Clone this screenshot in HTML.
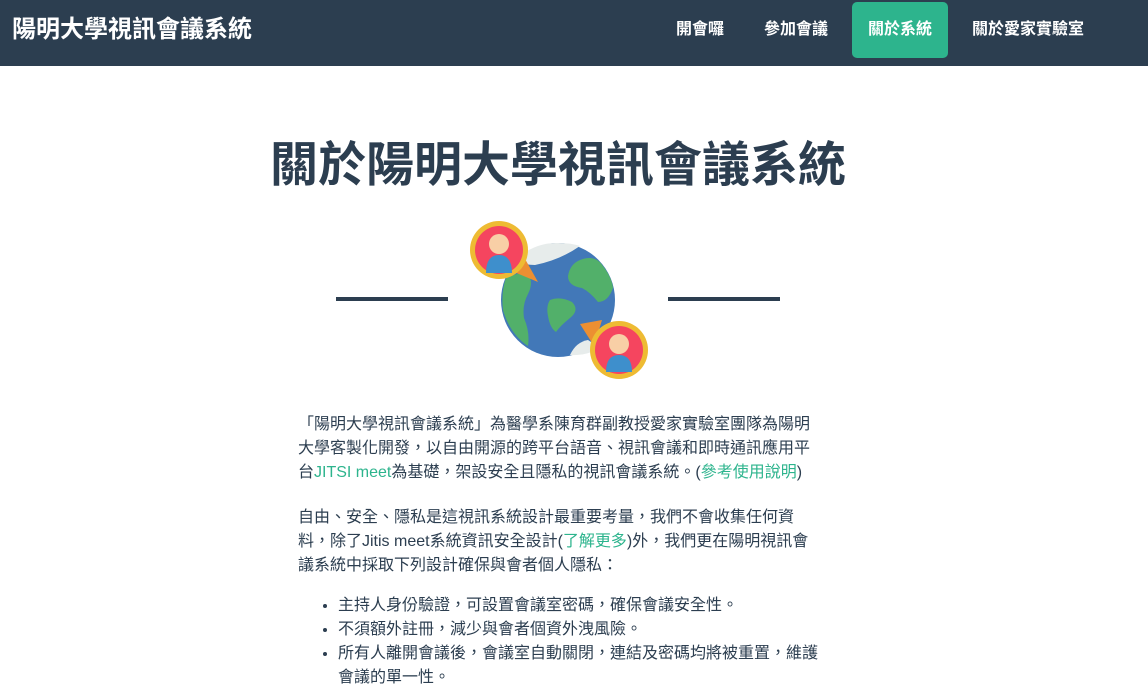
<!DOCTYPE html>
<html><head><meta charset="utf-8"><style>
body{margin:0;background:#fff;font-family:"Liberation Sans","Noto Sans CJK TC",sans-serif;color:#2c3e50;width:1148px;height:690px;overflow:hidden}
.nav{height:66px;background:#2c3e50;position:relative}
.brand{position:absolute;left:12px;top:14px;color:#fff;font-size:24px;font-weight:bold;line-height:32px}
.nav a{position:absolute;top:2px;height:56px;line-height:56px;color:#fff;font-size:16px;font-weight:bold;text-align:center;border-radius:5px}
h1{position:absolute;left:0;width:1116px;text-align:center;top:134px;margin:0;font-size:48px;line-height:64px;font-weight:bold}
.line{position:absolute;top:297px;height:4px;width:112px;background:#2c3e50}
.txt{position:absolute;left:298px;width:525px;font-size:16px;line-height:24px}
.txt p{margin:0 0 21px}
.txt p.l{margin-bottom:16px}
.g{color:#2db48d}
ul{margin:0;padding-left:40px}
</style></head><body>
<div class="nav"><div class="brand">陽明大學視訊會議系統</div>
<a style="left:660px;width:80px">開會囉</a>
<a style="left:750px;width:92px">參加會議</a>
<a style="left:852px;width:96px;background:#2db48d">關於系統</a>
<a style="left:958px;width:140px">關於愛家實驗室</a>
</div>
<h1>關於陽明大學視訊會議系統</h1>
<div class="line" style="left:336px"></div>
<div class="line" style="left:668px"></div>
<svg style="position:absolute;left:440px;top:210px" width="230" height="180" viewBox="0 0 230 180">
<circle cx="118" cy="90" r="57" fill="#4278b8"/>
<path d="M75 50 Q95 32 118 33 Q132 33 140 36 Q120 50 95 55 Q85 55 75 50Z" fill="#e7eceb"/>
<path d="M66 68 Q78 62 88 64 Q94 72 88 84 Q82 95 84 108 Q90 122 88 136 Q70 124 63 100 Q61 82 66 68Z" fill="#52b06a"/>
<path d="M140 50 Q155 44 163 56 Q172 68 173 78 Q168 92 158 92 Q150 82 142 78 Q128 76 128 66 Q130 54 140 50Z" fill="#52b06a"/>
<path d="M110 90 Q120 86 132 92 Q140 100 130 108 Q120 116 116 122 Q110 118 108 106 Q106 96 110 90Z" fill="#52b06a"/>
<path d="M130 145 Q136 132 148 130 L160 138 Q146 146 130 145Z" fill="#e7eceb"/>
<path d="M80 40 L98 72 L74 62Z" fill="#ec8f32"/>
<circle cx="59" cy="40" r="29" fill="#eebb33"/><circle cx="59" cy="40" r="24" fill="#f5455f"/>
<circle cx="59" cy="34" r="10" fill="#f8cfa6"/><path d="M46 63 Q46 45 59 45 Q72 45 72 63Z" fill="#3e8fcc"/>
<path d="M140 114 L162 110 L154 136Z" fill="#ec8f32"/>
<circle cx="179" cy="140" r="29" fill="#eebb33"/><circle cx="179" cy="140" r="24" fill="#f5455f"/>
<circle cx="179" cy="134" r="10" fill="#f8cfa6"/><path d="M166 162 Q166 145 179 145 Q192 145 192 162Z" fill="#3e8fcc"/>
</svg>
<div class="txt" style="top:413px">
<p>「陽明大學視訊會議系統」為醫學系陳育群副教授愛家實驗室團隊為陽明大學客製化開發，以自由開源的跨平台語音、視訊會議和即時通訊應用平台<span class="g">JITSI meet</span>為基礎，架設安全且隱私的視訊會議系統。(<span class="g">參考使用說明</span>)</p>
<p class="l">自由、安全、隱私是這視訊系統設計最重要考量，我們不會收集任何資料，除了Jitis meet系統資訊安全設計(<span class="g">了解更多</span>)外，我們更在陽明視訊會議系統中採取下列設計確保與會者個人隱私：</p>
<ul><li>主持人身份驗證，可設置會議室密碼，確保會議安全性。</li><li>不須額外註冊，減少與會者個資外洩風險。</li><li>所有人離開會議後，會議室自動關閉，連結及密碼均將被重置，維護會議的單一性。</li></ul>
</div>
</body></html>
